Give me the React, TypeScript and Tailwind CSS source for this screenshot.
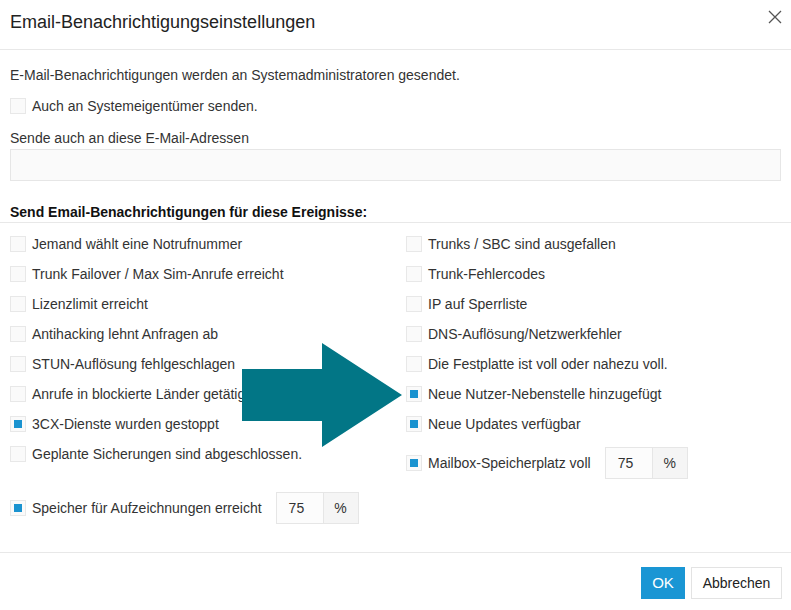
import React from "react";

function Box({ checked }: { checked?: boolean }) {
  return (
    <span className="flex h-[16px] w-[16px] shrink-0 items-center justify-center border border-[#e8e8e8] bg-[#fafafa]">
      {checked && <span className="block h-[8px] w-[8px] bg-[#1a93d0]" />}
    </span>
  );
}

function Row({ label, checked }: { label: string; checked?: boolean }) {
  return (
    <div className="flex h-[30px] items-center gap-[6px]">
      <Box checked={checked} />
      <span className="whitespace-nowrap">{label}</span>
    </div>
  );
}

function PercentInput() {
  return (
    <div className="ml-[8px] flex h-[32px]">
      <div className="flex w-[48px] items-center border border-[#e6e6e6] bg-[#fcfcfc] pl-[12px]">75</div>
      <div className="flex w-[35px] items-center justify-center border border-l-0 border-[#e6e6e6] bg-[#f5f5f5]">%</div>
    </div>
  );
}

export default function App() {
  const left: [string, boolean][] = [
    ["Jemand wählt eine Notrufnummer", false],
    ["Trunk Failover / Max Sim-Anrufe erreicht", false],
    ["Lizenzlimit erreicht", false],
    ["Antihacking lehnt Anfragen ab", false],
    ["STUN-Auflösung fehlgeschlagen", false],
    ["Anrufe in blockierte Länder getätigt", false],
    ["3CX-Dienste wurden gestoppt", true],
    ["Geplante Sicherungen sind abgeschlossen.", false],
  ];
  const right: [string, boolean][] = [
    ["Trunks / SBC sind ausgefallen", false],
    ["Trunk-Fehlercodes", false],
    ["IP auf Sperrliste", false],
    ["DNS-Auflösung/Netzwerkfehler", false],
    ["Die Festplatte ist voll oder nahezu voll.", false],
    ["Neue Nutzer-Nebenstelle hinzugefügt", true],
    ["Neue Updates verfügbar", true],
  ];
  return (
    <div
      className="relative h-[610px] w-[791px] overflow-hidden bg-white text-[14px] leading-[20px] text-[#333]"
      style={{ fontFamily: '"Liberation Sans", Arial, sans-serif' }}
    >
      {/* Header */}
      <div className="flex h-[50px] items-start justify-between border-b border-[#e8e8e8] pl-[10px] pr-[9px] pt-[10px]">
        <h1 className="text-[18px] leading-[24px] text-[#222]">Email-Benachrichtigungseinstellungen</h1>
        <svg width="14" height="14" viewBox="0 0 14 14">
          <path d="M1 1 L13 13 M13 1 L1 13" stroke="#555" strokeWidth="1.3" fill="none" />
        </svg>
      </div>

      {/* Body top */}
      <div className="px-[10px]">
        <p className="mt-[15px] h-[20px]">E-Mail-Benachrichtigungen werden an Systemadministratoren gesendet.</p>
        <div className="mt-[6px]">
          <Row label="Auch an Systemeigentümer senden." />
        </div>
        <p className="mt-[7px] h-[20px]">Sende auch an diese E-Mail-Adressen</p>
        <div className="mt-[1px] h-[32px] w-full border border-[#e6e6e6] bg-[#fafafa]" />
      </div>

      {/* Section heading */}
      <div className="mt-[21px] h-[21px] border-b border-[#e8e8e8] px-[10px]">
        <span className="font-bold text-[#111]">Send Email-Benachrichtigungen für diese Ereignisse:</span>
      </div>

      {/* Events */}
      <div className="mt-[6px] grid grid-cols-[396px_1fr] px-[10px]">
        <div className="flex flex-col">
          {left.map(([l, c]) => (
            <Row key={l} label={l} checked={c} />
          ))}
        </div>
        <div className="flex flex-col">
          {right.map(([l, c]) => (
            <Row key={l} label={l} checked={c} />
          ))}
          <div className="mt-[8px] flex h-[32px] items-center gap-[6px]">
            <Box checked />
            <span className="whitespace-nowrap">Mailbox-Speicherplatz voll</span>
            <PercentInput />
          </div>
        </div>
      </div>

      <div className="mt-[13px] flex h-[32px] items-center gap-[6px] px-[10px]">
        <Box checked />
        <span className="whitespace-nowrap">Speicher für Aufzeichnungen erreicht</span>
        <PercentInput />
      </div>

      {/* Footer */}
      <div className="mt-[28px] flex justify-end gap-[6px] border-t border-[#e8e8e8] pr-[9px] pt-[14px]">
        <button className="h-[32px] w-[44px] bg-[#1a96d4] text-[15px] text-white">OK</button>
        <button className="h-[32px] w-[91px] border border-[#e3e3e3] bg-white text-[14px] text-[#222]">Abbrechen</button>
      </div>

      {/* Arrow overlay */}
      <svg className="absolute left-[242px] top-[343px]" width="160" height="104" viewBox="0 0 160 104">
        <polygon points="0,26 80,26 80,0 160,52 80,104 80,78 0,78" fill="#027686" />
      </svg>
    </div>
  );
}
